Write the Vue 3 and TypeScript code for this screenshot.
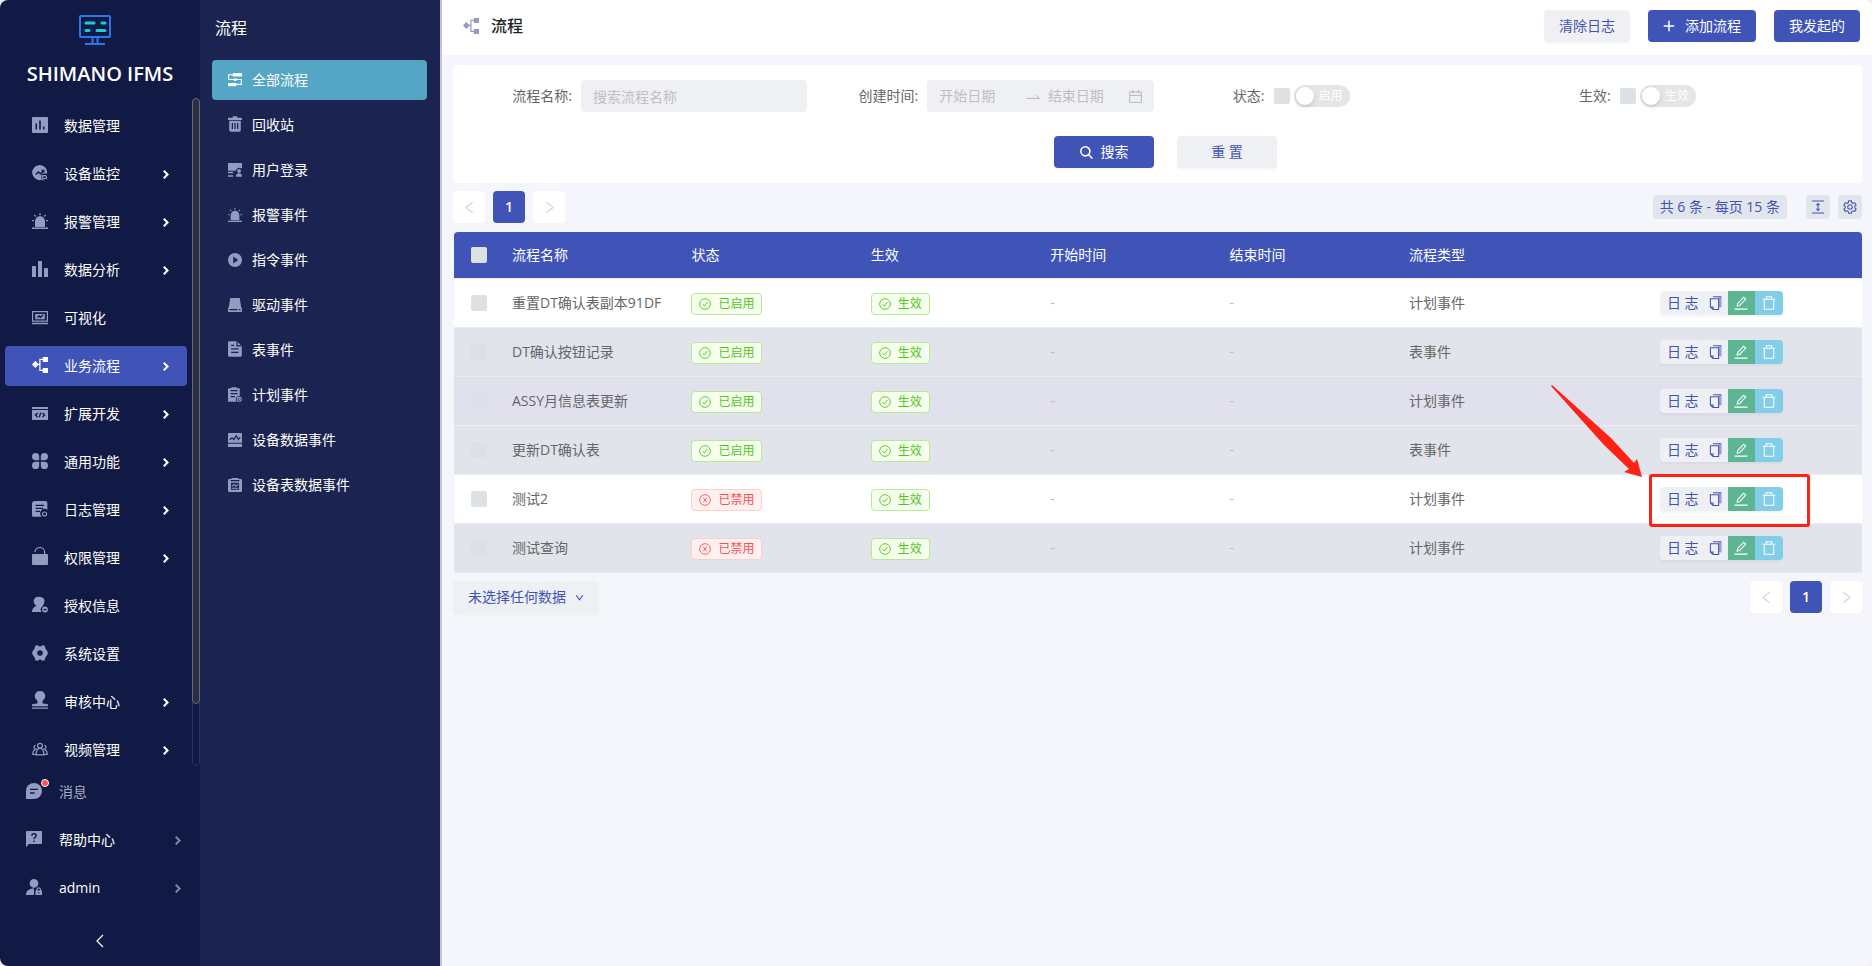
<script setup lang="ts">
import { h, ref } from 'vue'

// f: fill, s: stroke, k: cut-out fill, c: cut-out stroke
type Shape = ['f' | 's' | 'k' | 'c', string]

const icons: Record<string, Shape[]> = {
  data: [['f', 'M1 0H15a1 1 0 0 1 1 1V15a1 1 0 0 1-1 1H1a1 1 0 0 1-1-1V1a1 1 0 0 1 1-1z'], ['k', 'M3.5 6.5H5V12.5H3.5zM7.2 3.5H8.8V12.5H7.2zM11 9.5H12.5V12.5H11z']],
  monitor: [['f', 'M7.6 0a7.6 7.6 0 0 1 7.6 8.6H9.5V15A7.6 7.6 0 1 1 7.6 0z'], ['c', 'M3.8 9.6L6.4 7l2 1.8 3.2-3.2M9.6 5.4h2.2v2.2'], ['s', 'M10.8 15.5v-4.8h2.2a1.5 1.5 0 0 1 0 3h-1.4']],
  alarm: [['f', 'M3 14V8.2a5 5 0 0 1 10 0V14z'], ['f', 'M0 14.6H16V16H0zM7.4 0H8.6V2H7.4zM0 7H1.8V8.2H0zM14.2 7H16V8.2H14.2z'], ['s', 'M2.4 2l1.4 1.6M13.6 2l-1.4 1.6']],
  bars: [['f', 'M.8 5H3.2a.8.8 0 0 1 .8.8V16H0V5.8A.8.8 0 0 1 .8 5zM6.8 0H9.2a.8.8 0 0 1 .8.8V16H6V.8A.8.8 0 0 1 6.8 0zM12.8 7H15.2a.8.8 0 0 1 .8.8V16H12V7.8a.8.8 0 0 1 .8-.8z']],
  visual: [['s', 'M.6 2.6H15.4V12.2H.6z'], ['f', 'M0 13.8H16V15.2H0zM3.2 5H12.8V10.2H3.2z'], ['c', 'M5.4 8.6l1.7-1.7 1.4 1.4L11 6']],
  flow: [['f', 'M3.4 3.8L6.6 7.4 3.4 11 0 7.4zM10.8 0H16V5H10.8zM10.8 11H16V16H10.8z'], ['s', 'M4 7.4h3.8M11 2.4H7.9v11H11']],
  code: [['f', 'M0 2H16V4H0zM0 5H16V15H0z'], ['c', 'M5.6 8L3.4 10l2.2 2M10.4 8l2.2 2-2.2 2M8.8 7.6l-1.6 4.8']],
  clover: [['f', 'M3.6 0A3.6 3.6 0 0 1 7.2 3.6V7.2H3.6A3.6 3.6 0 0 1 3.6 0zM12.4 0A3.6 3.6 0 0 0 8.8 3.6V7.2H12.4A3.6 3.6 0 0 0 12.4 0zM3.6 16A3.6 3.6 0 0 0 7.2 12.4V8.8H3.6A3.6 3.6 0 0 0 3.6 16zM12.4 16A3.6 3.6 0 0 1 8.8 12.4V8.8H12.4A3.6 3.6 0 0 1 12.4 16z']],
  log: [['f', 'M3 0H13.4a2 2 0 0 1 2 2V8.8a4 4 0 0 0-5.6 6.9H1.6A1.6 1.6 0 0 1 0 14V3a3 3 0 0 1 3-3z'], ['c', 'M3.6 4.4H12M3.6 7.4H11M3.6 10.4H8'], ['s', 'M12.6 11a2 2 0 1 1 0 4 2 2 0 0 1 0-4z']],
  lock: [['f', 'M1 7H15a1 1 0 0 1 1 1V17a1 1 0 0 1-1 1H1a1 1 0 0 1-1-1V8a1 1 0 0 1 1-1z'], ['s', 'M3 5C3-1 12.6-1 12.6 5V7']],
  auth: [['f', 'M8 0a4.4 4.4 0 0 1 4 6.6L10.4 9.4A4 4 0 0 0 9.6 15H0c0-3.4 2-4.6 4.6-6.4A4.4 4.4 0 0 1 8 0zM13 9.6a2.9 2.9 0 1 1 0 5.8 2.9 2.9 0 0 1 0-5.8z'], ['c', 'M11.6 12.6h2.8']],
  gear: [['f', 'M3.4.6H6L8 1.8 10 .6h2.6l.8 3.2 1.4 1.4L16 8l-1.2 2.8-1.4 1.4-.8 3.2H10L8 14.2 6 15.4H3.4l-.8-3.2-1.4-1.4L0 8l1.2-2.8 1.4-1.4z'], ['k', 'M8 5.2a2.8 2.8 0 1 1 0 5.6 2.8 2.8 0 0 1 0-5.6z']],
  stamp: [['f', 'M8 0a5 5 0 0 1 3.4 8.8Q10 10.400 10.600 12.600L15 13a1 1 0 0 1 1 1V15.200H0V14a1 1 0 0 1 1-1L5.400 12.600Q6 10.400 4.600 8.800A5 5 0 0 1 8 0zM0 16.400H16V17.800H0z']],
  group: [['s', 'M8 2.4a2.4 2.4 0 1 1 0 4.8 2.4 2.4 0 0 1 0-4.8zM4.2 13.8C4.2 9 5.6 7.4 8 7.4s3.8 1.6 3.8 6.4zM3.6 4.4a1.8 1.8 0 1 0 1 3.4M12.4 4.4a1.8 1.8 0 1 1-1 3.4M3.4 8.6C1.6 9 .8 10.6.8 13.4H4M12.6 8.6c1.8.4 2.6 2 2.6 4.8H12']],
  message: [['f', 'M8 0a8 8 0 0 1 0 16H0V8A8 8 0 0 1 8 0z'], ['c', 'M4 6.4H12M4 10H8.6']],
  help: [['f', 'M1 0H15a1 1 0 0 1 1 1V12a1 1 0 0 1-1 1H3L0 16V1a1 1 0 0 1 1-1z'], ['c', 'M5.8 4.8C5.8 2 10.2 2 10.2 4.8 10.2 6.2 8 6.2 8 8.2M8 9.4v1.5']],
  admin: [['f', 'M8 0a4.4 4.4 0 1 1 0 8.8A4.4 4.4 0 0 1 8 0zM0 16c0-4 3-6.4 8-6.4V16zM9.4 11.6H16V16H9.4z'], ['s', 'M11 12v-1.4a1.7 1.7 0 0 1 3.4 0V12'], ['k', 'M12.2 13h1v1.6h-1z']],
  trash: [['f', 'M5.4 0h5.2v1.6H15a1 1 0 0 1 1 1V4.4H0V2.6a1 1 0 0 1 1-1H5.4zM1.4 5.2H14.6V16a1.6 1.6 0 0 1-1.6 1.6H3A1.6 1.6 0 0 1 1.4 16z'], ['c', 'M5 7.6v7M8 7.6v7M11 7.6v7']],
  allflow: [['f', 'M6.4 0H15a1 1 0 0 1 1 1V4H5.4V1a1 1 0 0 1 1-1zM0 11.4H9.6v2.8a1 1 0 0 1-1 1H1a1 1 0 0 1-1-1zM6.6 6.2H10V8.8H6.6z'], ['s', 'M5.4 2H.8V7.4H15.2V13H9.6']],
  login: [['f', 'M1 0H15a1 1 0 0 1 1 1V6.4a4.6 4.6 0 0 0-7.2 2.4H0V1a1 1 0 0 1 1-1zM0 10H6V11.6H0zM0 14H6V15.6H0zM12.6 6.8a2.2 2.2 0 1 1 0 4.4 2.2 2.2 0 0 1 0-4.4zM9 15.6c0-5 7-5 7 0z']],
  play: [['f', 'M8 0a8 8 0 1 1 0 16A8 8 0 0 1 8 0z'], ['k', 'M6 4l5.6 4L6 12z']],
  drive: [['f', 'M2.600 0H13.400L15.200 11H.8zM0 11H16V15a1 1 0 0 1-1 1H1a1 1 0 0 1-1-1z'], ['c', 'M1.600 13.400H11M12.600 13.400h1.600']],
  sheet: [['f', 'M1.6 0H10L15.8 5.4V16a1.6 1.6 0 0 1-1.6 1.6H1.6A1.6 1.6 0 0 1 0 16V1.6A1.6 1.6 0 0 1 1.6 0z'], ['c', 'M10.4 0v5.4h5M3.6 4.6H7M3.6 8.6H12M3.6 12.6H12']],
  plan: [['f', 'M1 1.4H4V0h6v1.4h3.4V10a4 4 0 0 0-3.6 6.6H0V2.4a1 1 0 0 1 1-1z'], ['c', 'M3 4H11M3 7.4H11M3 10.8H8'], ['s', 'M12.8 11.4a2.4 2.4 0 1 1 0 4.8 2.4 2.4 0 0 1 0-4.8zM12.6 12.6v1.4h1.2']],
  device: [['f', 'M1 0H15a1 1 0 0 1 1 1V11H0V1a1 1 0 0 1 1-1zM0 12.4H16V15a1 1 0 0 1-1 1H1a1 1 0 0 1-1-1z'], ['c', 'M2 7.6l2.6-2 2 2L9.4 3l2.4 4.4L14 4.6']],
  clip: [['f', 'M1.4 1H4V0h8V1H14.6A1.4 1.4 0 0 1 16 2.4V14.6A1.4 1.4 0 0 1 14.6 16H1.4A1.4 1.4 0 0 1 0 14.6V2.4A1.4 1.4 0 0 1 1.4 1z'], ['k', 'M3 2.200H13V3.600H3zM3.400 5.400H12.600V13.400H3.400z'], ['s', 'M4.400 9.600L7 7.400l2 2 2.600-2.400M4.400 11.800H11.600']],
  right: [['s', 'M5.5 2.5L11 8l-5.5 5.5']],
  left: [['s', 'M11 2L5 8l6 6']],
  prev: [['s', 'M12 1.5L3.5 8l8.5 6.5']],
  next: [['s', 'M4 1.5L12.5 8L4 14.5']],
  down: [['s', 'M2 4l6 8 6-8']],
  plus: [['s', 'M8 1v14M1 8h14']],
  search: [['s', 'M6.6.9a5.6 5.6 0 1 1 0 11.2A5.6 5.6 0 0 1 6.6.9zM10.8 10.8L15.2 15.4']],
  swap: [['s', 'M0 10.4H15.4L10.6 6']],
  calendar: [['s', 'M.8 2.4H15.2V15.2H.8zM.8 6.8H15.2M4.6 0V4.2M11.4 0V4.2']],
  height: [['s', 'M1 1.2H15M1 14.8H15M8 4.4v7.2M6 6L8 4l2 2M6 10l2 2 2-2']],
  cog: [['s', 'M6.5.9h3l.5 2 1.5.9 2-.6 1.5 2.6L13.5 7.2v1.700l1.500 1.400-1.500 2.600-2-.600-1.500.900-.500 2h-3l-.500-2-1.500-.900-2 .600L1 10.300l1.500-1.400V7.200L1 5.800l1.500-2.600 2 .600L6 2.900zM8 5.400a2.600 2.600 0 1 1 0 5.200 2.600 2.600 0 0 1 0-5.200z']],
  check: [['s', 'M8 .9a7.1 7.1 0 1 1 0 14.2A7.1 7.1 0 0 1 8 .9zM4.9 8.2l2.2 2.6L11.2 5.4']],
  cross: [['s', 'M8 .9a7.1 7.1 0 1 1 0 14.2A7.1 7.1 0 0 1 8 .9zM5.6 5l4.8 6M10.4 5l-4.8 6']],
  copy: [['f', 'M11 1.2H14.4V13H11z'], ['s', 'M1.6 3.2H11V15.4H4.6L1.6 12.6zM4.6 15.2V12.6H1.8M4.6.8H14.2']],
  edit: [['s', 'M.6 15H15.4M3.6 11.6l.6-3L11 1.4l2.4 2.2L6.6 10.8z']],
  bin: [['s', 'M.8 3.6H15.2M4.8 3.4V.9h6.4v2.5M2.6 3.8V15.2H13.4V3.8']],
}

// Tall glyphs rise above the 16-unit box by this much
const rise: Record<string, number> = { lock: 2, stamp: 2, trash: 2, sheet: 2, plan: 1 }

const Icon = (props: { name: string }) =>
  h(
    'svg',
    { viewBox: `0 ${rise[props.name] ?? 0} 16 16`, class: 'icon', 'aria-hidden': 'true' },
    icons[props.name].map(([kind, d]) => h('path', { class: 'ic-' + kind, d })),
  )
Icon.props = ['name']

const menu = [
  { icon: 'data', text: '数据管理', sub: false },
  { icon: 'monitor', text: '设备监控', sub: true },
  { icon: 'alarm', text: '报警管理', sub: true },
  { icon: 'bars', text: '数据分析', sub: true },
  { icon: 'visual', text: '可视化', sub: false },
  { icon: 'flow', text: '业务流程', sub: true },
  { icon: 'code', text: '扩展开发', sub: true },
  { icon: 'clover', text: '通用功能', sub: true },
  { icon: 'log', text: '日志管理', sub: true },
  { icon: 'lock', text: '权限管理', sub: true },
  { icon: 'auth', text: '授权信息', sub: false },
  { icon: 'gear', text: '系统设置', sub: false },
  { icon: 'stamp', text: '审核中心', sub: true },
  { icon: 'group', text: '视频管理', sub: true },
]
const activeMenu = ref('业务流程')

const subMenu = [
  { icon: 'allflow', text: '全部流程' },
  { icon: 'trash', text: '回收站' },
  { icon: 'login', text: '用户登录' },
  { icon: 'alarm', text: '报警事件' },
  { icon: 'play', text: '指令事件' },
  { icon: 'drive', text: '驱动事件' },
  { icon: 'sheet', text: '表事件' },
  { icon: 'plan', text: '计划事件' },
  { icon: 'device', text: '设备数据事件' },
  { icon: 'clip', text: '设备表数据事件' },
]
const activeSub = ref('全部流程')

const columns = ['流程名称', '状态', '生效', '开始时间', '结束时间', '流程类型']
const rows = ref([
  { name: '重置DT确认表副本91DF', enabled: true, type: '计划事件', tone: 'plain', marked: false, checked: false },
  { name: 'DT确认按钮记录', enabled: true, type: '表事件', tone: 'shade', marked: false, checked: false },
  { name: 'ASSY月信息表更新', enabled: true, type: '计划事件', tone: 'hover', marked: false, checked: false },
  { name: '更新DT确认表', enabled: true, type: '表事件', tone: 'shade', marked: false, checked: false },
  { name: '测试2', enabled: false, type: '计划事件', tone: 'plain', marked: true, checked: false },
  { name: '测试查询', enabled: false, type: '计划事件', tone: 'shade', marked: false, checked: false },
])

const keyword = ref('')
const startDate = ref('')
const endDate = ref('')
</script>

<template>
  <div class="app">
    <aside class="side">
      <div class="brand">
        <svg class="logo" viewBox="0 0 34 32" aria-hidden="true">
          <path class="logo-frame" d="M3 2H31Q32 2 32 3V22Q32 23 31 23H3Q2 23 2 22V3Q2 2 3 2zM14.5 23V29.500M19.500 23V29.500M7 30H27" />
          <path class="logo-lines" d="M8 9H16M24 9H27M8 16.500H11M19 16.500H27" />
        </svg>
        <h1>SHIMANO IFMS</h1>
      </div>
      <div class="nav-wrap">
        <nav class="nav">
          <a
            v-for="m in menu"
            :key="m.text"
            href="#"
            class="nav-item"
            :class="{ active: m.text === activeMenu }"
            @click.prevent="activeMenu = m.text"
          >
            <Icon :name="m.icon" class="lead" />
            <span>{{ m.text }}</span>
            <Icon v-if="m.sub" name="right" class="chev" />
          </a>
        </nav>
        <div class="track"><div class="thumb"></div></div>
      </div>
      <div class="side-foot">
        <a href="#" class="foot-item dim"><span class="bell lead"><Icon name="message" /><i class="dot"></i></span><span>消息</span></a>
        <a href="#" class="foot-item"><Icon name="help" class="lead" /><span>帮助中心</span><Icon name="right" class="chev" /></a>
        <a href="#" class="foot-item"><Icon name="admin" class="lead" /><span>admin</span><Icon name="right" class="chev" /></a>
        <button class="collapse" type="button" aria-label="收起"><Icon name="left" /></button>
      </div>
    </aside>

    <aside class="sub">
      <h2>流程</h2>
      <nav class="sub-nav">
        <a
          v-for="s in subMenu"
          :key="s.text"
          href="#"
          class="sub-item"
          :class="{ active: s.text === activeSub }"
          @click.prevent="activeSub = s.text"
        >
          <Icon :name="s.icon" />
          <span>{{ s.text }}</span>
        </a>
      </nav>
    </aside>

    <main class="main">
      <header class="head">
        <Icon name="flow" />
        <h2>流程</h2>
        <div class="head-actions">
          <button type="button" class="btn soft">清除日志</button>
          <button type="button" class="btn primary"><Icon name="plus" />添加流程</button>
          <button type="button" class="btn primary">我发起的</button>
        </div>
      </header>

      <div class="content">
        <form class="card" @submit.prevent>
          <div class="fields">
            <div class="field">
              <label for="kw">流程名称:</label>
              <input id="kw" v-model="keyword" class="box" type="text" placeholder="搜索流程名称" />
            </div>
            <div class="field">
              <label for="start">创建时间:</label>
              <div class="box range">
                <input id="start" v-model="startDate" type="text" placeholder="开始日期" />
                <Icon name="swap" />
                <input v-model="endDate" type="text" placeholder="结束日期" aria-label="结束日期" />
                <Icon name="calendar" />
              </div>
            </div>
            <div class="field">
              <label for="st">状态:</label>
              <div class="toggle">
                <input id="st" type="checkbox" class="check" />
                <button type="button" class="switch" role="switch" aria-checked="false">启用</button>
              </div>
            </div>
            <div class="field">
              <label for="ef">生效:</label>
              <div class="toggle">
                <input id="ef" type="checkbox" class="check" />
                <button type="button" class="switch" role="switch" aria-checked="false">生效</button>
              </div>
            </div>
          </div>
          <div class="form-actions">
            <button type="submit" class="btn primary wide"><Icon name="search" />搜索</button>
            <button type="reset" class="btn soft wide">重 置</button>
          </div>
        </form>

        <div class="bar">
          <div class="pager">
            <button type="button" disabled aria-label="上一页"><Icon name="prev" /></button>
            <button type="button" class="cur">1</button>
            <button type="button" disabled aria-label="下一页"><Icon name="next" /></button>
          </div>
          <div class="tools">
            <span class="info">共 6 条 - 每页 15 条</span>
            <button type="button" aria-label="密度"><Icon name="height" /></button>
            <button type="button" aria-label="设置"><Icon name="cog" /></button>
          </div>
        </div>

        <div class="grid-wrap">
          <table class="grid">
            <colgroup>
              <col class="c-check" />
              <col v-for="c in columns" :key="c" class="c-text" />
              <col class="c-act" />
            </colgroup>
            <thead>
              <tr>
                <th class="pick"><input type="checkbox" class="check" aria-label="全选" /></th>
                <th v-for="c in columns" :key="c">{{ c }}</th>
                <th></th>
              </tr>
            </thead>
            <tbody>
              <tr v-for="r in rows" :key="r.name" :class="r.tone">
                <td class="pick"><input v-model="r.checked" type="checkbox" class="check" :aria-label="r.name" /></td>
                <td>{{ r.name }}</td>
                <td>
                  <span class="tag" :class="r.enabled ? 'ok' : 'bad'"><Icon :name="r.enabled ? 'check' : 'cross'" />{{ r.enabled ? '已启用' : '已禁用' }}</span>
                </td>
                <td><span class="tag ok"><Icon name="check" />生效</span></td>
                <td class="none">-</td>
                <td class="none">-</td>
                <td>{{ r.type }}</td>
                <td class="act">
                  <div class="ops">
                    <button type="button" class="op-log">日 志</button>
                    <button type="button" class="op-copy" aria-label="复制"><Icon name="copy" /></button>
                    <button type="button" class="op-edit" aria-label="编辑"><Icon name="edit" /></button>
                    <button type="button" class="op-del" aria-label="删除"><Icon name="bin" /></button>
                    <template v-if="r.marked">
                      <span class="mark"></span>
                      <svg class="arrow" viewBox="0 0 91 92" aria-hidden="true">
                        <path d="M1 0L60 53 83 78 86 74 91 92 73 87 78 84 53 60 0 1z" />
                      </svg>
                    </template>
                  </div>
                </td>
              </tr>
            </tbody>
          </table>
        </div>

        <div class="bar foot">
          <button type="button" class="btn soft pick-info">未选择任何数据<Icon name="down" /></button>
          <div class="pager">
            <button type="button" disabled aria-label="上一页"><Icon name="prev" /></button>
            <button type="button" class="cur">1</button>
            <button type="button" disabled aria-label="下一页"><Icon name="next" /></button>
          </div>
        </div>
      </div>
    </main>
  </div>
</template>

<style>
body {
  margin: 0;
  background: #f0f0f2;
}
.icon {
  width: 16px;
  height: 16px;
  flex: none;
  display: block;
  overflow: visible;
}
.icon .ic-f {
  fill: currentColor;
}
.icon .ic-s {
  fill: none;
  stroke: currentColor;
  stroke-width: var(--line, 1.2);
}
.icon .ic-k {
  fill: var(--cut, #111a44);
}
.icon .ic-c {
  fill: none;
  stroke: var(--cut, #111a44);
  stroke-width: 1.4;
}
</style>

<style scoped>
* {
  box-sizing: border-box;
}
.app {
  display: flex;
  height: 100vh;
  overflow: hidden;
  border-radius: 8px;
  background: #f5f6fb;
  font: 14px/22px 'Open Sans', 'Noto Sans CJK SC', sans-serif;
  color: #666;
}
h1,
h2 {
  margin: 0;
}
a {
  color: inherit;
  text-decoration: none;
}
button,
input {
  font: inherit;
  color: inherit;
  border: 0;
  padding: 0;
  margin: 0;
  background: none;
}

.side {
  width: 200px;
  flex: none;
  display: flex;
  flex-direction: column;
  background: #111a44;
  color: #fff;
}
.brand {
  height: 98px;
  flex: none;
  display: flex;
  flex-direction: column;
  align-items: center;
  padding-top: 14px;
}
.logo {
  width: 34px;
  height: 32px;
  margin-right: 10px;
  fill: none;
}
.logo-frame {
  stroke: #2a78e8;
  stroke-width: 2;
}
.logo-lines {
  stroke: #12d0dc;
  stroke-width: 3;
  stroke-linecap: round;
}
.brand h1 {
  margin-top: 14px;
  font-size: 20px;
  line-height: 28px;
  font-weight: 600;
  white-space: nowrap;
}
.nav-wrap {
  position: relative;
  flex: 1;
  min-height: 0;
}
.nav {
  height: 100%;
  overflow-y: auto;
  scrollbar-width: none;
  padding: 8px 13px 0 5px;
}
.nav-item {
  display: flex;
  align-items: center;
  height: 40px;
  margin-bottom: 8px;
  padding: 0 16px 0 27px;
  gap: 16px;
  border-radius: 4px;
}
.lead {
  margin-bottom: 2px;
}
.nav-item > .icon,
.foot-item .icon,
.sub-item > .icon {
  color: #939bc0;
}
.nav-item.active {
  background: #4054b8;
  --cut: #4054b8;
}
.nav-item.active > .icon {
  color: #fff;
}
.nav-item > .chev,
.foot-item > .chev {
  width: 11px;
  height: 11px;
  margin-left: auto;
  color: #fff;
  --line: 3;
}
.foot-item > .chev {
  color: #8087a4;
}
.track {
  position: absolute;
  top: 0;
  right: 0;
  bottom: 0;
  width: 8px;
  border: 1px solid #2a315a;
  border-radius: 4px;
}
.thumb {
  width: 8px;
  height: 91%;
  margin: -1px;
  border: 1px solid #666872;
  border-radius: 4px;
  background: #2b2e42;
}
.side-foot {
  flex: none;
  padding: 2px 0 6px;
}
.foot-item {
  display: flex;
  align-items: center;
  height: 48px;
  gap: 17px;
  padding: 0 17px 0 26px;
}
.foot-item.dim {
  color: #a9adc0;
}
.bell {
  position: relative;
}
.dot {
  position: absolute;
  top: -4px;
  right: -7px;
  width: 8px;
  height: 8px;
  border: 1px solid #fff;
  border-radius: 50%;
  background: #ff4d4f;
}
.collapse {
  display: flex;
  justify-content: center;
  align-items: center;
  width: 100%;
  height: 48px;
  padding-top: 10px;
}

.sub {
  width: 240px;
  flex: none;
  background: #1b2451;
  color: #fff;
  --cut: #1b2451;
  padding: 0 13px 0 12px;
}
.sub h2 {
  height: 60px;
  padding: 16px 3px;
  font-size: 16px;
  line-height: 24px;
  font-weight: 400;
}
.sub-nav {
  display: flex;
  flex-direction: column;
  gap: 5px;
}
.sub-item {
  display: flex;
  align-items: center;
  height: 40px;
  gap: 10px;
  padding-left: 16px;
  border-radius: 4px;
}
.sub-item > .icon {
  width: 14px;
  height: 14px;
}
.sub-item.active {
  background: #55a6c5;
}
.sub-item.active > .icon {
  color: #fff;
}

.main {
  flex: 1;
  min-width: 0;
  border-left: 2px solid #c4c5cf;
}
.head {
  display: flex;
  align-items: center;
  height: 55px;
  padding: 0 12px 4px 21px;
  background: #fff;
}
.head > .icon {
  color: #939bc0;
}
.head h2 {
  margin-left: 12px;
  font-size: 16px;
  line-height: 24px;
  font-weight: 500;
  color: #1f1f1f;
}
.head-actions {
  display: flex;
  gap: 18px;
  margin-left: auto;
}
.btn {
  display: inline-flex;
  align-items: center;
  justify-content: center;
  gap: 8px;
  height: 32px;
  padding: 0 15px;
  border-radius: 4px;
  box-shadow: 0 2px 2px rgba(0, 0, 0, 0.03);
}
.btn .icon {
  width: 13px;
  height: 13px;
}
.head .btn .icon {
  width: 12px;
  height: 12px;
  margin-right: 2px;
  --line: 2;
}
.soft {
  background: #eff0f3;
  color: #4054b8;
}
.primary {
  background: #4054b8;
  color: #fff;
}
.wide {
  width: 100px;
}
.wide .icon {
  --line: 2;
}
.content {
  padding: 10px 10px 10px 11px;
}
.card {
  height: 118px;
  padding: 15px 16px 15px 8px;
  background: #fff;
  border-radius: 4px;
}
.fields {
  display: grid;
  grid-template-columns: repeat(4, 1fr);
}
.field {
  display: flex;
  align-items: center;
  height: 32px;
}
.field label {
  width: 111px;
  margin-right: 9px;
  text-align: right;
}
.box {
  flex: 1;
  min-width: 0;
  height: 32px;
  padding: 0 12px;
  border-radius: 4px;
  background: #eff0f3;
}
.box::placeholder,
.range input::placeholder {
  color: #bfbfbf;
  opacity: 1;
}
.range {
  display: flex;
  align-items: center;
}
.range input {
  flex: 1;
  min-width: 0;
  width: 0;
}
.range .icon {
  width: 13px;
  height: 13px;
  color: #b5b5b5;
}
.range input + .icon:not(:last-child) {
  margin: 0 8px 0 7px;
}
.toggle {
  display: flex;
  align-items: center;
  gap: 4px;
}
.check {
  appearance: none;
  display: block;
  width: 16px;
  height: 16px;
  border-radius: 2px;
  background: #dce1e6;
}
.check:checked {
  background: #4054b8;
}
.switch {
  display: flex;
  align-items: center;
  gap: 5px;
  height: 22px;
  padding: 0 7px 0 2px;
  border-radius: 11px;
  background: #e5e5e5;
  color: #fff;
  font-size: 12px;
}
.switch::before {
  content: '';
  width: 18px;
  height: 18px;
  border-radius: 50%;
  background: #fff;
  box-shadow: 0 2px 4px rgba(0, 35, 11, 0.15);
}
.form-actions {
  display: flex;
  justify-content: center;
  gap: 23px;
  padding: 24px 0 0 24px;
}

.bar {
  display: flex;
  align-items: center;
  justify-content: space-between;
  padding: 8px 0 9px;
}
.pager {
  display: flex;
  gap: 8px;
}
.pager button {
  display: flex;
  align-items: center;
  justify-content: center;
  width: 32px;
  height: 32px;
  border-radius: 4px;
  background: #fff;
  color: #bfbfbf;
}
.pager .icon {
  width: 13px;
  height: 13px;
}
.pager .cur {
  background: #4054b8;
  color: #fff;
  font-weight: 600;
}
.tools {
  display: flex;
  align-items: center;
  gap: 8px;
  color: #4054b8;
}
.tools .info {
  height: 24px;
  margin-right: 11px;
  padding: 0 7px;
  line-height: 24px;
  border-radius: 4px;
  background: #e2e5ec;
}
.tools button {
  display: flex;
  align-items: center;
  justify-content: center;
  width: 24px;
  height: 24px;
  border-radius: 4px;
  background: #e2e5ec;
}
.tools .icon {
  width: 14px;
  height: 14px;
}

.grid-wrap {
  padding-left: 1px;
}
.grid {
  width: 100%;
  table-layout: fixed;
  border-collapse: separate;
  border-spacing: 0;
}
.c-check {
  width: 50px;
}
.c-act {
  width: 20%;
}
th,
td {
  padding: 0 8px;
  text-align: left;
  white-space: nowrap;
  border-bottom: 1px solid #ececef;
}
th {
  height: 47px;
  background: #4054b8;
  color: #fff;
  font-weight: 400;
}
th:first-child {
  border-top-left-radius: 4px;
}
th:last-child {
  border-top-right-radius: 4px;
}
td {
  height: 49px;
}
.pick .check {
  margin: 0 auto;
}
.plain td {
  background: #fff;
}
.shade td {
  background: #e2e4ec;
}
.hover td {
  background: #e0e1ed;
}
.shade .check,
.hover .check {
  background: #dde0e5;
}
td.none {
  color: #bbb;
}
.tag {
  display: inline-flex;
  align-items: center;
  gap: 7px;
  height: 22px;
  padding: 0 7px;
  border: 1px solid;
  border-radius: 4px;
  font-size: 12px;
  line-height: 20px;
  vertical-align: middle;
}
.tag .icon {
  width: 12px;
  height: 12px;
}
.ok {
  color: #52c41a;
  background: #f6ffed;
  border-color: #b7eb8f;
}
.bad {
  color: #ff4d4f;
  background: #fff1f0;
  border-color: #ffccc7;
}
td.act {
  text-align: center;
}
.ops {
  position: relative;
  display: inline-flex;
  height: 24px;
  vertical-align: middle;
}
.ops button {
  display: flex;
  align-items: center;
  justify-content: center;
  width: 27px;
  height: 24px;
  color: #fff;
  box-shadow: 0 2px 2px rgba(0, 0, 0, 0.04);
}
.ops .icon {
  width: 14px;
  height: 14px;
}
.ops .op-log {
  width: 44px;
  padding-left: 2px;
  border-radius: 4px 0 0 4px;
  background: #eff0f3;
  color: #4054b8;
}
.ops .op-copy {
  width: 24px;
  background: #eff0f3;
  color: #4054b8;
}
.op-copy :deep(.ic-f) {
  fill: #9aa4dc;
}
.ops .op-edit {
  background: #5db594;
}
.ops .op-del {
  width: 28px;
  border-radius: 0 4px 4px 0;
  background: #82cde8;
}
.mark {
  position: absolute;
  top: -13px;
  left: -11px;
  width: 161px;
  height: 53px;
  border: 3px solid #ff2113;
  border-radius: 3px;
  pointer-events: none;
}
.arrow {
  position: absolute;
  top: -102px;
  left: -109px;
  width: 91px;
  height: 92px;
  fill: #ff2113;
  pointer-events: none;
}
.foot .pick-info {
  gap: 9px;
}
.foot .pick-info .icon {
  width: 9px;
  height: 9px;
  --line: 2;
}
</style>
